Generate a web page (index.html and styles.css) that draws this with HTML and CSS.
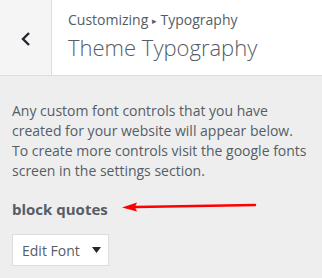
FILE: index.html
```html
<!DOCTYPE html>
<html lang="en">
<head>
  <meta charset="UTF-8" />
  <title>Theme Typography</title>
  <link rel="stylesheet" href="styles.css">
</head>
<body>
  <div class="section-head">
    <button type="button" class="back" aria-label="Back">
      <svg width="12" height="16" viewBox="0 0 12 16"><path d="M9 2 L3 8 L9 14" fill="none" stroke="#23282d" stroke-width="2.4"/></svg>
    </button>
    <div class="titles">
      <span class="action">Customizing <span class="sep">&#9656;</span> Typography</span>
      <h3 class="title">Theme Typography</h3>
    </div>
  </div>

  <div class="content">
    <p class="desc">Any custom font controls that you have created for your website will appear below. To create more controls visit the google fonts screen in the settings section.</p>

    <div class="control">
      <span class="label">block quotes</span>
      <svg class="pointer" width="136" height="10" viewBox="0 0 136 10"><path d="M14 5 L133 3" stroke="#f00" stroke-width="2.5" stroke-linecap="round"/><path d="M0 5.5 L15 0.5 L13 5 L15 9.5 Z" fill="#f00"/></svg>
    </div>

    <button type="button" class="edit-font">Edit Font <svg class="caret" width="9" height="6" viewBox="0 0 9 6"><path d="M0 0 H9 L4.5 6 Z" fill="#23282d"/></svg></button>
  </div>
</body>
</html>
```

FILE: styles.css
```css
* {
  box-sizing: border-box;
}

body {
  margin: 0;
  background: #eee;
  font-family: "Open Sans", sans-serif;
  color: #555d66;
}

.section-head {
  display: flex;
  height: 76px;
  background: #fff;
  border-bottom: 1px solid #ddd;
}

.back {
  width: 52px;
  background: #f5f5f5;
  border: none;
  border-right: 1px solid #ddd;
  padding: 2px 0 0 0;
  display: flex;
  align-items: center;
  justify-content: center;
}

.titles {
  padding: 9px 0 0 16px;
}

.action {
  display: block;
  font-size: 14px;
  line-height: 22px;
}

.sep {
  font-size: 9px;
  vertical-align: 1px;
}

.title {
  margin: 0;
  font-size: 22px;
  font-weight: 300;
  line-height: 30px;
}

.content {
  padding: 25px 12px;
}

.desc {
  margin: 0;
  font-size: 14px;
  line-height: 20px;
}

.control {
  display: flex;
  align-items: center;
  margin-top: 18px;
}

.label {
  font-size: 15px;
  font-weight: 700;
  line-height: 20px;
}

.pointer {
  margin-left: 14px;
  margin-top: -4px;
}

.edit-font {
  margin-top: 15px;
  width: 97px;
  height: 32px;
  background: #fff;
  border: 1px solid #ddd;
  padding: 0 0 0 9px;
  display: flex;
  align-items: center;
  font-family: "Open Sans", sans-serif;
  font-size: 14px;
  color: #555d66;
}

.caret {
  margin-left: 12px;
}
```
